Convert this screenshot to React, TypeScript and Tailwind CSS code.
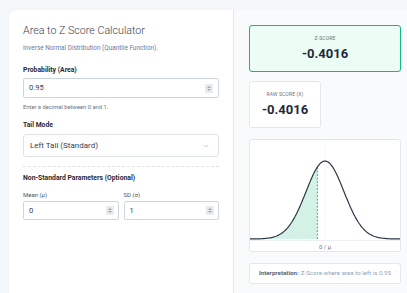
import { ChevronDown } from "lucide-react";

const W = 150;
const BASE = 99;
const PEAK_H = 78;
const MU_X = 75;
const SD_PX = 19;
const Z = -0.4016;

function curveY(px: number) {
  const z = (px - MU_X) / SD_PX;
  return BASE - PEAK_H * Math.exp((-z * z) / 2);
}

function buildPaths() {
  const pts: string[] = [];
  for (let px = 0; px <= W; px += 1) {
    pts.push(`${px},${curveY(px).toFixed(2)}`);
  }
  const zx = MU_X + Z * SD_PX;
  const shade: string[] = [`0,${BASE}`];
  for (let px = 0; px < zx; px += 1) {
    shade.push(`${px},${curveY(px).toFixed(2)}`);
  }
  shade.push(`${zx.toFixed(2)},${curveY(zx).toFixed(2)}`);
  shade.push(`${zx.toFixed(2)},${BASE}`);
  return {
    line: "M" + pts.join(" L"),
    area: "M" + shade.join(" L") + " Z",
    zx,
  };
}

function Spinner() {
  return (
    <div className="flex h-[9px] w-[8px] flex-col items-center justify-center gap-[1px] bg-[#e9eaec]">
      <svg width="4" height="2" viewBox="0 0 4 2">
        <path d="M0 2 L2 0 L4 2 Z" fill="#a3a7ad" />
      </svg>
      <svg width="4" height="2" viewBox="0 0 4 2">
        <path d="M0 0 L2 2 L4 0 Z" fill="#a3a7ad" />
      </svg>
    </div>
  );
}

function NumberField({ value }: { value: string }) {
  return (
    <div className="flex h-[19px] items-center justify-between rounded-[2px] border border-[#cdd5df] bg-white pl-[5px] pr-[4px]">
      <span className="text-[7.5px] text-[#374151]">{value}</span>
      <Spinner />
    </div>
  );
}

function Chart() {
  const { line, area, zx } = buildPaths();
  return (
    <div className="mt-[11px] h-[113px] rounded-[3px] border border-[#e3e7ec] bg-white">
      <svg width={W} height={100} viewBox={`0 0 ${W} 100`} className="block">
        <line x1={MU_X} y1={0} x2={MU_X} y2={BASE} stroke="#e5e7eb" strokeWidth="0.8" strokeDasharray="1 1.5" />
        <path d={area} fill="#d3f1e4" />
        <line x1={zx} y1={curveY(zx)} x2={zx} y2={BASE} stroke="#10b981" strokeWidth="0.9" strokeDasharray="2 1.5" />
        <path d={line} fill="none" stroke="#2d3748" strokeWidth="1.2" />
      </svg>
      <div className="flex h-[11px] items-center justify-center border-t border-[#eceff3] text-[6px] text-[#6b7280]">
        0 / μ
      </div>
    </div>
  );
}

export default function App() {
  return (
    <div className="h-screen overflow-hidden bg-[#f4f7fa] pl-[9px] pt-[10px] font-['Roboto',sans-serif]">
      <div className="flex h-full w-[420px] overflow-hidden rounded-tl-[8px] bg-white">
        {/* Left: inputs */}
        <div className="w-[225px] shrink-0 border-r border-[#e5e7eb] px-[14px] pt-[14px]">
          <h1 className="text-[10.7px] font-light leading-[14px] text-[#374151]">
            Area to Z Score Calculator
          </h1>
          <p className="mt-[6px] text-[6.4px] leading-[8px] text-[#6b7ca3]">
            Inverse Normal Distribution (Quantile Function).
          </p>

          <div className="mt-[14px] text-[6.8px] font-bold leading-[9px] text-[#1f2937]">
            Probability (Area)
          </div>
          <div className="mt-[3px] flex h-[20px] items-center justify-between rounded-[2px] border border-[#cdd5df] bg-white pl-[5px] pr-[5px]">
            <span className="text-[7.5px] text-[#374151]">0.95</span>
            <Spinner />
          </div>
          <p className="mt-[5px] text-[5.8px] leading-[8px] text-[#6b7280]">
            Enter a decimal between 0 and 1.
          </p>

          <div className="mt-[10px] text-[6.8px] font-bold leading-[9px] text-[#1f2937]">
            Tail Mode
          </div>
          <div className="mt-[4px] flex h-[23px] items-center justify-between rounded-[3px] border border-[#dfe3e8] bg-white pl-[6px] pr-[8px]">
            <span className="text-[8px] text-[#374151]">Left Tail (Standard)</span>
            <ChevronDown size={8} strokeWidth={1.5} className="text-[#9ca3af]" />
          </div>

          <div className="mt-[9px] border-t border-dashed border-[#dfe3e8]" />

          <div className="mt-[7px] text-[6.8px] font-bold leading-[9px] text-[#1f2937]">
            Non-Standard Parameters (Optional)
          </div>

          <div className="mt-[8px] grid grid-cols-2 gap-[5px]">
            <div>
              <div className="text-[6px] leading-[8px] text-[#4b5563]">Mean (μ)</div>
              <div className="mt-[2px]">
                <NumberField value="0" />
              </div>
            </div>
            <div>
              <div className="text-[6px] leading-[8px] text-[#4b5563]">SD (σ)</div>
              <div className="mt-[2px]">
                <NumberField value="1" />
              </div>
            </div>
          </div>
        </div>

        {/* Right: results */}
        <div className="w-[190px] shrink-0 bg-[#f8fafc] pl-[15px] pt-[15px]">
          <div className="w-[152px]">
            <div className="flex h-[47px] flex-col items-center justify-center gap-[4px] rounded-[3px] border border-[#10b981] bg-[#ecfdf5]">
              <div className="text-[5px] leading-[7px] tracking-wide text-[#6b7280]">Z-SCORE</div>
              <div className="text-[13px] font-bold leading-[16px] text-[#1e293b]">-0.4016</div>
            </div>

            <div className="mt-[9px] grid grid-cols-2 gap-[8px]">
              <div className="flex h-[47px] flex-col items-center justify-center gap-[4px] rounded-[3px] border border-[#e3e7ec] bg-white">
                <div className="text-[5px] leading-[7px] tracking-wide text-[#6b7280]">RAW SCORE (X)</div>
                <div className="text-[13px] font-bold leading-[16px] text-[#1e293b]">-0.4016</div>
              </div>
            </div>

            <Chart />

            <div className="mt-[11px] flex h-[21px] items-center justify-center rounded-[3px] border border-[#e3e7ec] bg-white text-[6.2px] text-[#94a3b8]">
              <span className="mr-[2px] font-bold text-[#5b6475]">Interpretation:</span>
              Z-Score where area to left is 0.95
            </div>
          </div>
        </div>
      </div>
    </div>
  );
}
